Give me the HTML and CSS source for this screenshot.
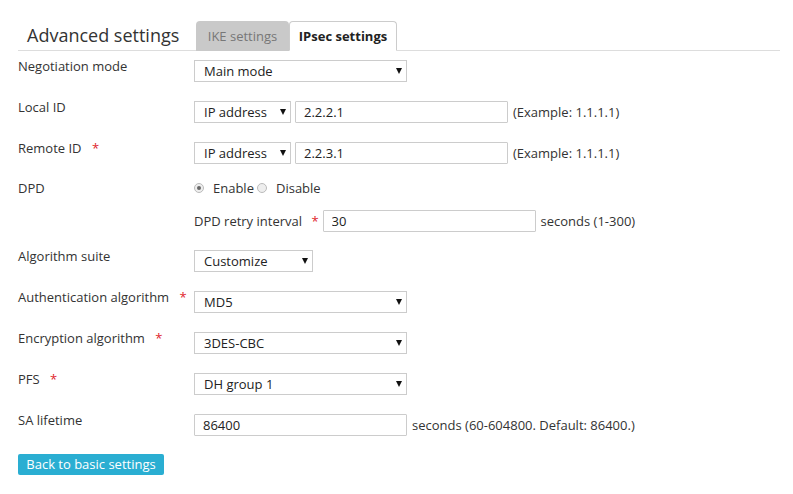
FILE: index.html
```html
<!DOCTYPE html>
<html lang="en">
<head>
    <meta charset="UTF-8">
    <title>Advanced settings</title>
    <link rel="stylesheet" href="styles.css">
</head>
<body>
    <div class="container">
        <!-- Header with tabs -->
        <div class="header">
            <h2 class="title">Advanced settings</h2>
            <div class="tabs">
                <div class="tab">IKE settings</div>
                <div class="tab active">IPsec settings</div>
            </div>
        </div>

        <form class="form">
            <div class="row">
                <label class="label">Negotiation mode</label>
                <span class="select-wrap w-wide"><select><option>Main mode</option></select></span>
            </div>

            <div class="row">
                <label class="label">Local ID</label>
                <span class="select-wrap w-small"><select><option>IP address</option></select></span>
                <input type="text" class="text-input id-input" value="2.2.2.1">
                <span class="hint">(Example: 1.1.1.1)</span>
            </div>

            <div class="row">
                <label class="label">Remote ID <span class="req">*</span></label>
                <span class="select-wrap w-small"><select><option>IP address</option></select></span>
                <input type="text" class="text-input id-input" value="2.2.3.1">
                <span class="hint">(Example: 1.1.1.1)</span>
            </div>

            <div class="row radio-row">
                <label class="label">DPD</label>
                <span class="radio checked"></span><span class="radio-text">Enable</span>
                <span class="radio"></span><span class="radio-text">Disable</span>
            </div>

            <div class="row sub-row">
                <span class="sub-label">DPD retry interval <span class="req">*</span></span>
                <input type="text" class="text-input w-wide" value="30">
                <span class="hint">seconds (1-300)</span>
            </div>

            <div class="row">
                <label class="label">Algorithm suite</label>
                <span class="select-wrap w-mid"><select><option>Customize</option></select></span>
            </div>

            <div class="row">
                <label class="label">Authentication algorithm <span class="req">*</span></label>
                <span class="select-wrap w-wide"><select><option>MD5</option></select></span>
            </div>

            <div class="row">
                <label class="label">Encryption algorithm <span class="req">*</span></label>
                <span class="select-wrap w-wide"><select><option>3DES-CBC</option></select></span>
            </div>

            <div class="row">
                <label class="label">PFS <span class="req">*</span></label>
                <span class="select-wrap w-wide"><select><option>DH group 1</option></select></span>
            </div>

            <div class="row">
                <label class="label">SA lifetime</label>
                <input type="text" class="text-input w-wide" value="86400">
                <span class="hint">seconds (60-604800. Default: 86400.)</span>
            </div>

            <button type="button" class="btn">Back to basic settings</button>
        </form>
    </div>
</body>
</html>
```

FILE: styles.css
```css
/* Reset */
* {
    margin: 0;
    padding: 0;
    box-sizing: border-box;
}

body {
    font-family: 'Open Sans', 'Noto Sans', sans-serif;
    font-size: 13px;
    color: #333;
    background: #fff;
}

.container {
    padding: 20px 13px 0 18px;
}

/* Header */
.header {
    display: flex;
    align-items: flex-end;
    border-bottom: 1px solid #ddd;
    height: 31px;
}

.title {
    font-size: 18px;
    font-weight: normal;
    color: #333;
    padding-left: 9px;
    width: 178px;
    line-height: 26px;
    align-self: center;
}

.tabs {
    display: flex;
    height: 30px;
    margin-bottom: -1px;
}

.tab {
    height: 30px;
    line-height: 30px;
    background: #c9c9c9;
    color: #777;
    border-radius: 4px 4px 0 0;
    width: 93px;
    text-align: center;
    white-space: nowrap;
}

.tab.active {
    background: #fff;
    color: #222;
    font-weight: bold;
    border: 1px solid #ccc;
    border-bottom-color: #fff;
    line-height: 28px;
    width: 108px;
}

/* Form rows */
.form {
    padding-top: 9px;
}

.row {
    display: flex;
    align-items: center;
    height: 22px;
    margin-bottom: 19px;
}

.label {
    width: 176px;
    flex-shrink: 0;
    align-self: flex-start;
    line-height: 14px;
    margin-top: -1px;
}

.req {
    color: #e0242b;
    margin-left: 7px;
}

.select-wrap {
    position: relative;
    display: inline-block;
    height: 22px;
}

.select-wrap::after {
    content: "";
    position: absolute;
    right: 5px;
    top: 8px;
    border-left: 3px solid transparent;
    border-right: 3px solid transparent;
    border-top: 6px solid #111;
    pointer-events: none;
}

select {
    appearance: none;
    -webkit-appearance: none;
    width: 100%;
    height: 22px;
    border: 1px solid #ccc;
    background: #fff;
    font-family: inherit;
    font-size: 13px;
    color: #222;
    padding: 0 18px 0 9px;
    border-radius: 0;
}

.text-input {
    height: 22px;
    border: 1px solid #ccc;
    border-radius: 1px;
    font-family: inherit;
    font-size: 13px;
    color: #222;
    padding: 0 8px;
}

.w-wide { width: 213px; }
.w-small { width: 97px; }
.w-mid { width: 119px; }

.id-input {
    width: 213px;
    margin-left: 4px;
}

.hint {
    margin-left: 5px;
    color: #333;
}

/* DPD radios */
.radio-row {
    height: 18px;
    margin-top: -4px;
    margin-bottom: 13px;
}

.radio-row .label {
    margin-top: 2px;
}

.radio {
    width: 10px;
    height: 10px;
    border: 1px solid #bbb;
    border-radius: 50%;
    background: #eee;
    position: relative;
}

.radio.checked::after {
    content: "";
    position: absolute;
    left: 2px;
    top: 2px;
    width: 4px;
    height: 4px;
    border-radius: 50%;
    background: #666;
}

.radio-text {
    margin-left: 9px;
    margin-right: 3px;
}

.sub-row {
    padding-left: 176px;
    margin-bottom: 18px;
}

.sub-label {
    margin-right: 4px;
    margin-top: -1px;
}

.sub-label .req {
    margin-left: 6px;
}

/* Button */
.btn {
    width: 146px;
    height: 21px;
    background: #2aaed2;
    color: #fff;
    border: none;
    border-radius: 2px;
    font-family: inherit;
    font-size: 13px;
    margin-top: -2px;
}
```
